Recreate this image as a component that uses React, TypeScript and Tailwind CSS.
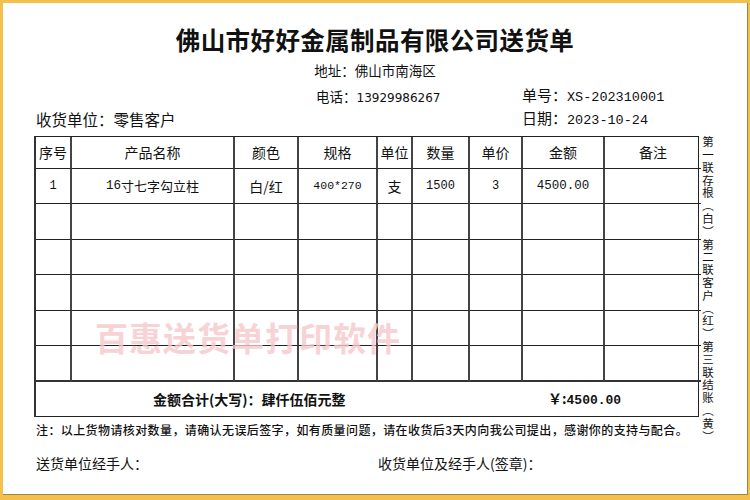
import React from "react";

const cols = "grid grid-cols-[36px_163px_64px_79px_35px_57px_53px_82px_96px]";
const cjk = "font-['Noto_Sans_CJK_SC',sans-serif]";
const mono = "font-['Liberation_Mono','Noto_Sans_CJK_SC',monospace]";

const headers = ["序号", "产品名称", "颜色", "规格", "单位", "数量", "单价", "金额", "备注"];

function Cell({ children, last, className = "" }: { children?: React.ReactNode; last?: boolean; className?: string }) {
  return (
    <div
      className={`flex items-center justify-center border-b border-[#222] ${last ? "" : "border-r-2 border-r-[#444]"} ${className}`}
    >
      {children}
    </div>
  );
}

export default function App() {
  const emptyRows = [36, 35, 36, 35, 36];
  return (
    <div className="w-[750px] h-[500px] bg-[#f3c14b] pt-[3px] pl-[3px] pr-[2px] pb-[5px]">
      <div className={`relative w-full h-full bg-white border-r border-b border-[#9c8444] text-[#111] ${cjk}`}>
        <div className="pt-[22px] h-[52px] text-center text-[24.5px] leading-[30px] font-bold tracking-[0.4px]">
          佛山市好好金属制品有限公司送货单
        </div>
        <div className="h-[27px] text-center text-[13.5px] leading-[30px]">地址：佛山市南海区</div>
        <div className="flex h-[25px] items-center pl-[313px] pt-[3px]">
          <div className="w-[206px] text-[13.5px]">电话：<span className="font-['Tahoma','DejaVu_Sans',sans-serif] text-[12px]">13929986267</span></div>
          <div className="text-[15px]">单号：<span className={`${mono} text-[13.5px]`}>XS-202310001</span></div>
        </div>
        <div className="flex h-[25px] items-center pl-[33px]">
          <div className="w-[486px] text-[15.5px]">收货单位：零售客户</div>
          <div className="text-[15px]">日期：<span className={`${mono} text-[13.5px]`}>2023-10-24</span></div>
        </div>
        <div className="flex items-start pl-[31px] mt-[4px]">
          <div className="w-[665px] border-l-2 border-t border-r border-[#222] border-l-[#333]">
            <div className={`${cols} h-[32px] text-[14px]`}>
              {headers.map((h, i) => (
                <Cell key={h} last={i === 8}>{h}</Cell>
              ))}
            </div>
            <div className={`${cols} h-[35px] text-[13px]`}>
              <Cell><span className={`${mono} text-[12px]`}>1</span></Cell>
              <Cell><span className={`${mono} text-[12.5px]`}>16</span>寸七字勾立柱</Cell>
              <Cell className="text-[14px]">白/红</Cell>
              <Cell><span className={`${mono} text-[11.5px]`}>400*270</span></Cell>
              <Cell className="text-[14px]">支</Cell>
              <Cell><span className={`${mono} text-[12px]`}>1500</span></Cell>
              <Cell><span className={`${mono} text-[12px]`}>3</span></Cell>
              <Cell><span className={`${mono} text-[12.5px]`}>4500.00</span></Cell>
              <Cell last />
            </div>
            {emptyRows.map((h, r) => (
              <div key={r} className={`${cols} ${h === 36 ? "h-[36px]" : "h-[35px]"}`}>
                {headers.map((_, i) => (
                  <Cell key={i} last={i === 8} className={r === 4 ? "border-b-2 border-b-[#333]" : ""} />
                ))}
              </div>
            ))}
            <div className="flex h-[35px] items-center border-b border-[#222] text-[14px] font-bold">
              <div className="w-[512px] pl-[117px]">金额合计(大写)：肆仟伍佰元整</div>
              <div>￥:<span className={`${mono} text-[13px]`}>4500.00</span></div>
            </div>
          </div>
          <div className="h-[280px] w-[18px] pl-[1px]">
            <div className="[writing-mode:vertical-rl] [text-orientation:upright] text-[11.5px] leading-[16px] tracking-[1.3px] whitespace-nowrap">
              第一联存根︵白︶第二联客户︵红︶第三联结账︵黄︶
            </div>
          </div>
        </div>
        <div className="pl-[33px] mt-[6px] text-[12px] leading-[14px] tracking-[0.4px] font-medium">
          注：以上货物请核对数量，请确认无误后签字，如有质量问题，请在收货后3天内向我公司提出，感谢你的支持与配合。
        </div>
        <div className="flex pl-[33px] mt-[16px] text-[14px]">
          <div className="w-[342px]">送货单位经手人：</div>
          <div>收货单位及经手人(签章)：</div>
        </div>
        <div className="pointer-events-none absolute left-[92px] top-[314px] text-[33px] leading-[40px] font-bold text-[#f7c9cb] opacity-80 tracking-[1px]">
          百惠送货单打印软件
        </div>
      </div>
    </div>
  );
}
